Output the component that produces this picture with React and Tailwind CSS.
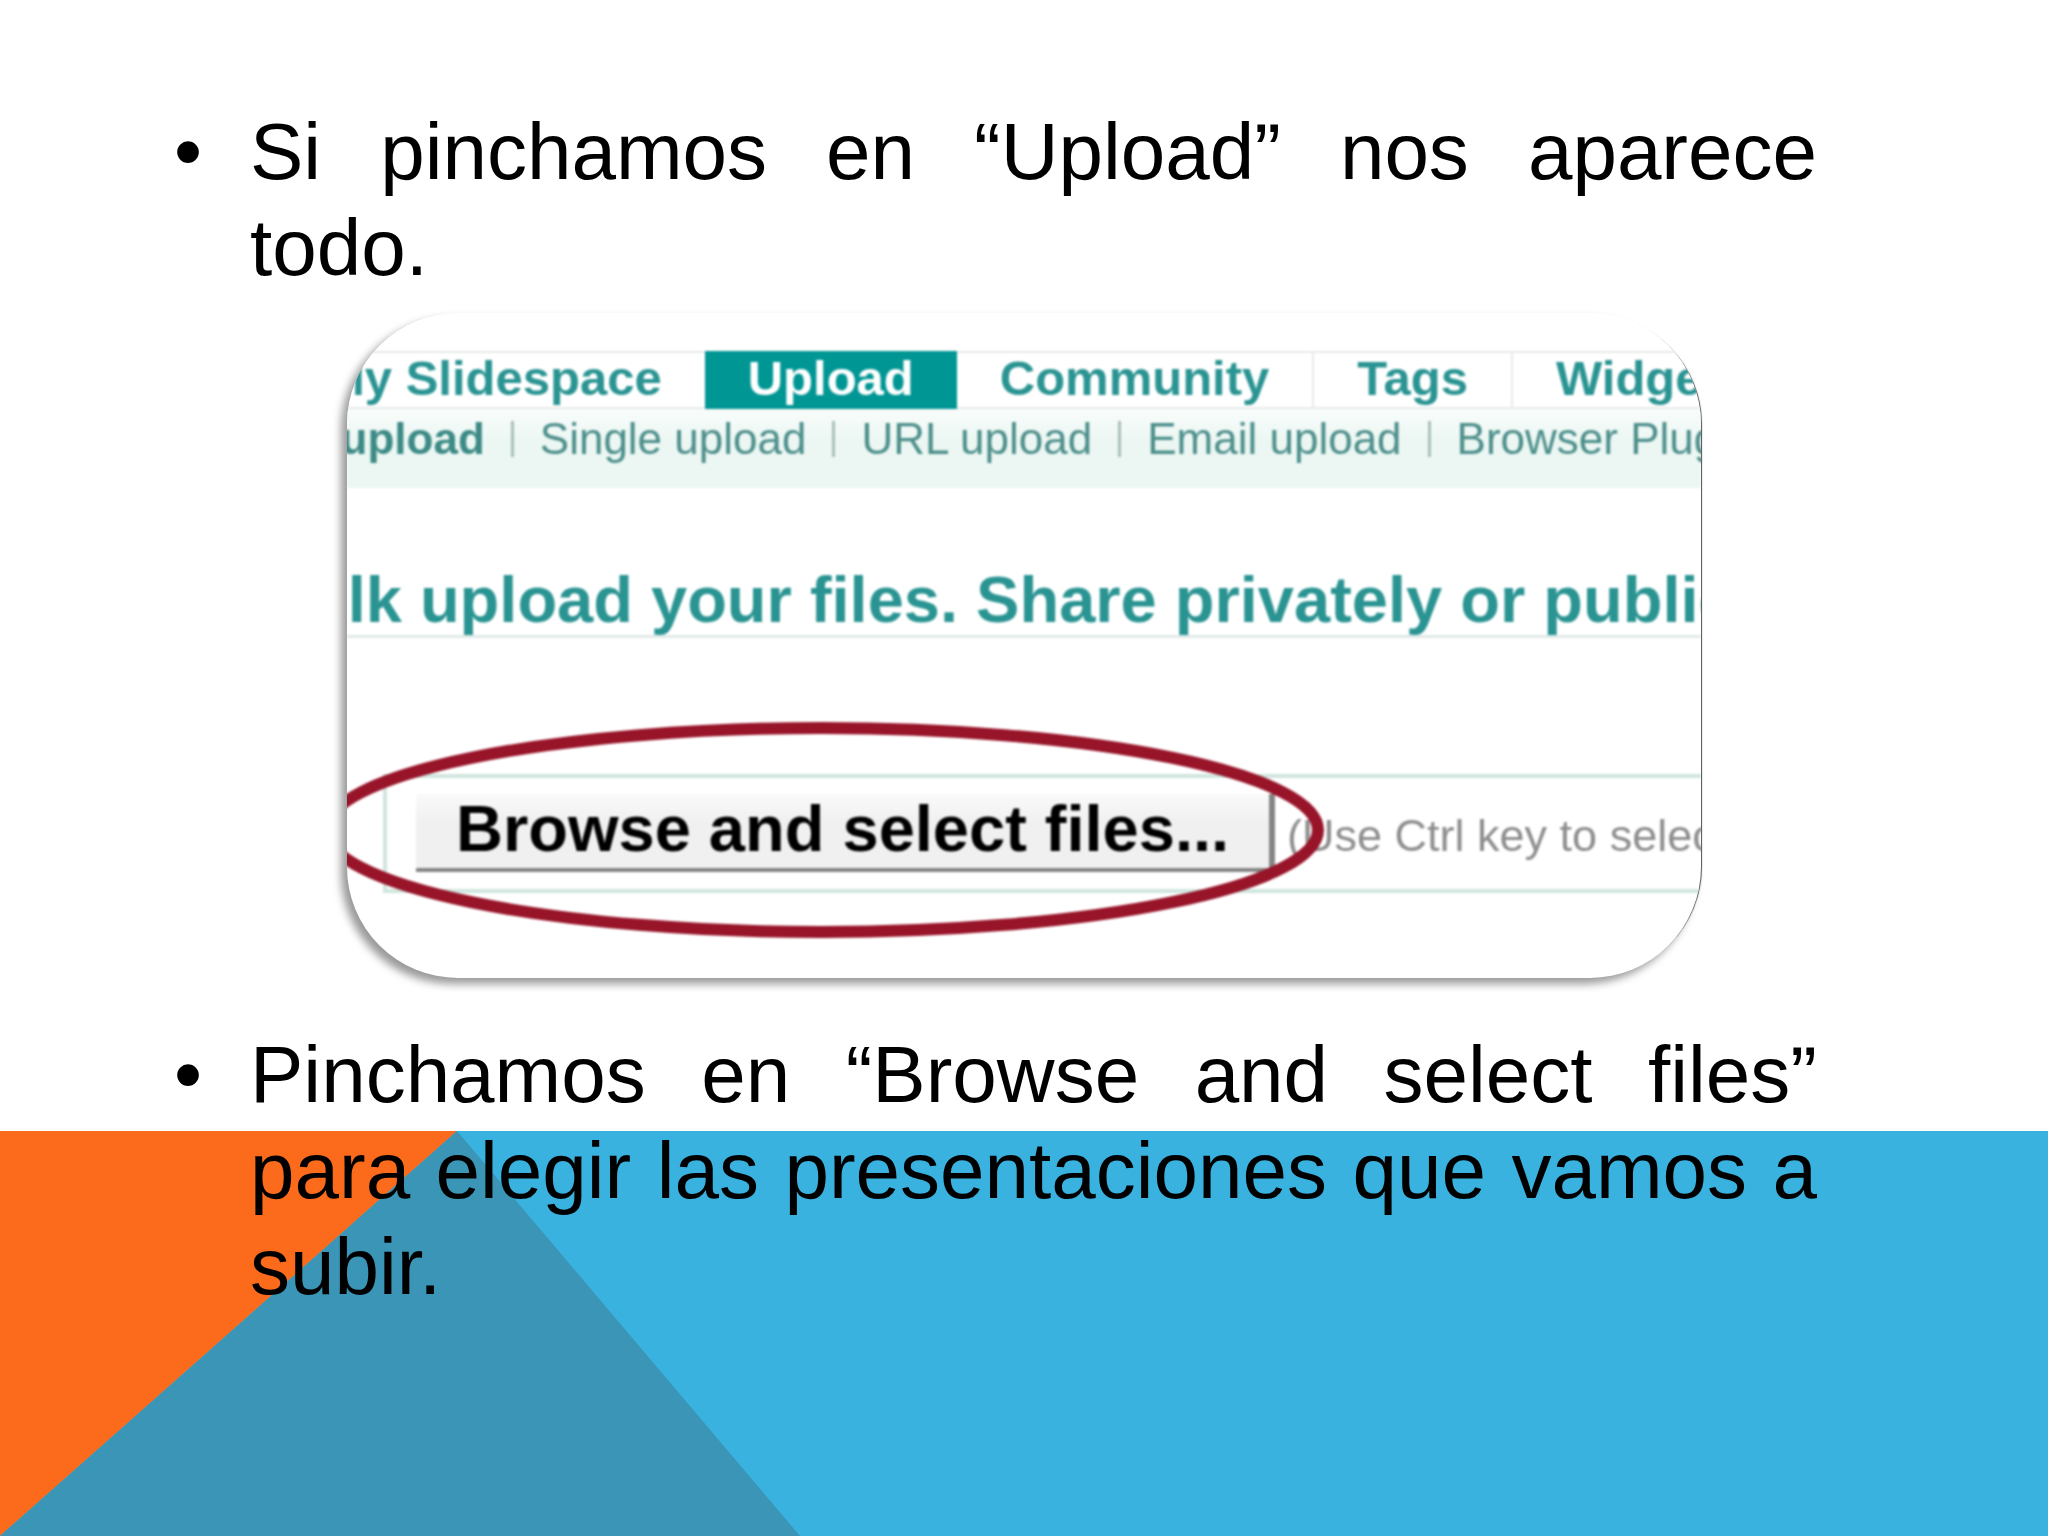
import React from "react";

const tabs = [
  { label: "My Slidespace" },
  { label: "Upload", active: true },
  { label: "Community" },
  { label: "Tags", divided: true },
  { label: "Widgets", divided: true },
];

const uploadLinks = [
  "Bulk upload",
  "Single upload",
  "URL upload",
  "Email upload",
  "Browser Plugin",
];

function Bullet({ children }) {
  return (
    <div className="flex pl-[174px] pr-[231px] text-[80px] leading-[96px] text-black">
      <span className="w-[76px] shrink-0">•</span>
      <p className="flex-1 text-justify">{children}</p>
    </div>
  );
}

function Backdrop() {
  return (
    <svg
      className="absolute bottom-0 left-0 w-full aspect-[2048/405]"
      viewBox="0 0 2048 405"
      preserveAspectRatio="none"
      aria-hidden="true"
    >
      <rect width="2048" height="405" fill="#3ab2e0" />
      <polygon points="0,0 457,0 0,405" fill="#fc6b1b" />
      <polygon points="457,0 800,405 0,405" fill="#3b95b6" />
    </svg>
  );
}

function TabBar() {
  return (
    <nav className="-ml-[66px] flex">
      {tabs.map((tab) => (
        <a
          key={tab.label}
          href="#"
          className={
            "border-y-2 px-[43px] pt-0.5 pb-1.5 text-[49px] leading-[46px] font-bold " +
            (tab.active
              ? "border-[#009694] bg-[#009694] text-white"
              : "border-[#e6ebea] text-[#2a9492]") +
            (tab.divided ? " border-l-2" : "")
          }
        >
          {tab.label}
        </a>
      ))}
      <span className="flex-1 border-y-2 border-[#e6ebea]" />
    </nav>
  );
}

function SubNav() {
  return (
    <nav className="bg-linear-to-b from-[#f9fdfc] to-[#ecf7f3] to-40% pt-1.5 pb-[25px]">
      <div className="-ml-[114px] flex items-center text-[44px] leading-[48px] text-[#4d8f8b]">
        {uploadLinks.map((link, i) => (
          <React.Fragment key={link}>
            {i > 0 && <span className="mx-[26px] h-9 w-[3px] shrink-0 bg-[#a9bfbb]" />}
            <a href="#" className={i === 0 ? "font-bold text-[#3d8a86]" : ""}>
              {link}
            </a>
          </React.Fragment>
        ))}
      </div>
    </nav>
  );
}

function FilePicker() {
  return (
    <div className="relative mt-[136px] ml-9 flex items-baseline border-4 border-r-0 border-[#d0e6df] pt-4 pb-[17px] pl-[29px]">
      <button
        type="button"
        className="shrink-0 border-r-[6px] border-b-4 border-[#858585] bg-linear-to-b from-[#fafafa] to-[#f0f0f1] to-40% px-10 pt-0.5 pb-[7px] text-[65px] leading-[65px] font-bold text-black"
      >
        Browse and select files...
      </button>
      <span className="ml-3 text-[45px] leading-[48px] text-[#8e8e8e]">
        (Use Ctrl key to select multiple files)
      </span>

      {/* red ring around the button */}
      <svg
        className="pointer-events-none absolute -top-14 -left-[68px] h-[216px] w-[1006px]"
        viewBox="0 0 1006 216"
        aria-hidden="true"
      >
        <ellipse cx="503" cy="108" rx="496" ry="102" fill="none" stroke="#981429" strokeWidth="12" />
      </svg>
    </div>
  );
}

function Clipping() {
  return (
    <div className="mx-auto mt-[17px] mb-[49px] w-full max-w-[1354px] overflow-hidden rounded-[111px] bg-white shadow-[-6px_6px_8px_rgba(0,0,0,0.4),4px_0_1px_-3px_#555]">
      <div className="pt-[38px] pb-[85px] whitespace-nowrap blur-[1px]">
        <TabBar />
        <SubNav />
        <h2 className="mt-[77px] border-b-[3px] border-[#e0eae8] text-[65px] leading-[70px] font-bold text-[#2a9492]">
          <span className="-ml-[86px]">
            Bulk upload your files. Share privately or publicly.
          </span>
        </h2>
        <FilePicker />
      </div>
    </div>
  );
}

export default function App() {
  return (
    <main className="relative min-h-screen overflow-hidden bg-white font-['Liberation_Sans',Arial,sans-serif]">
      <Backdrop />
      <div className="relative pt-[104px]">
        <Bullet>Si pinchamos en “Upload” nos aparece todo.</Bullet>
        <Clipping />
        <Bullet>
          Pinchamos en “Browse and select files” para elegir las presentaciones
          que vamos a subir.
        </Bullet>
      </div>
    </main>
  );
}
